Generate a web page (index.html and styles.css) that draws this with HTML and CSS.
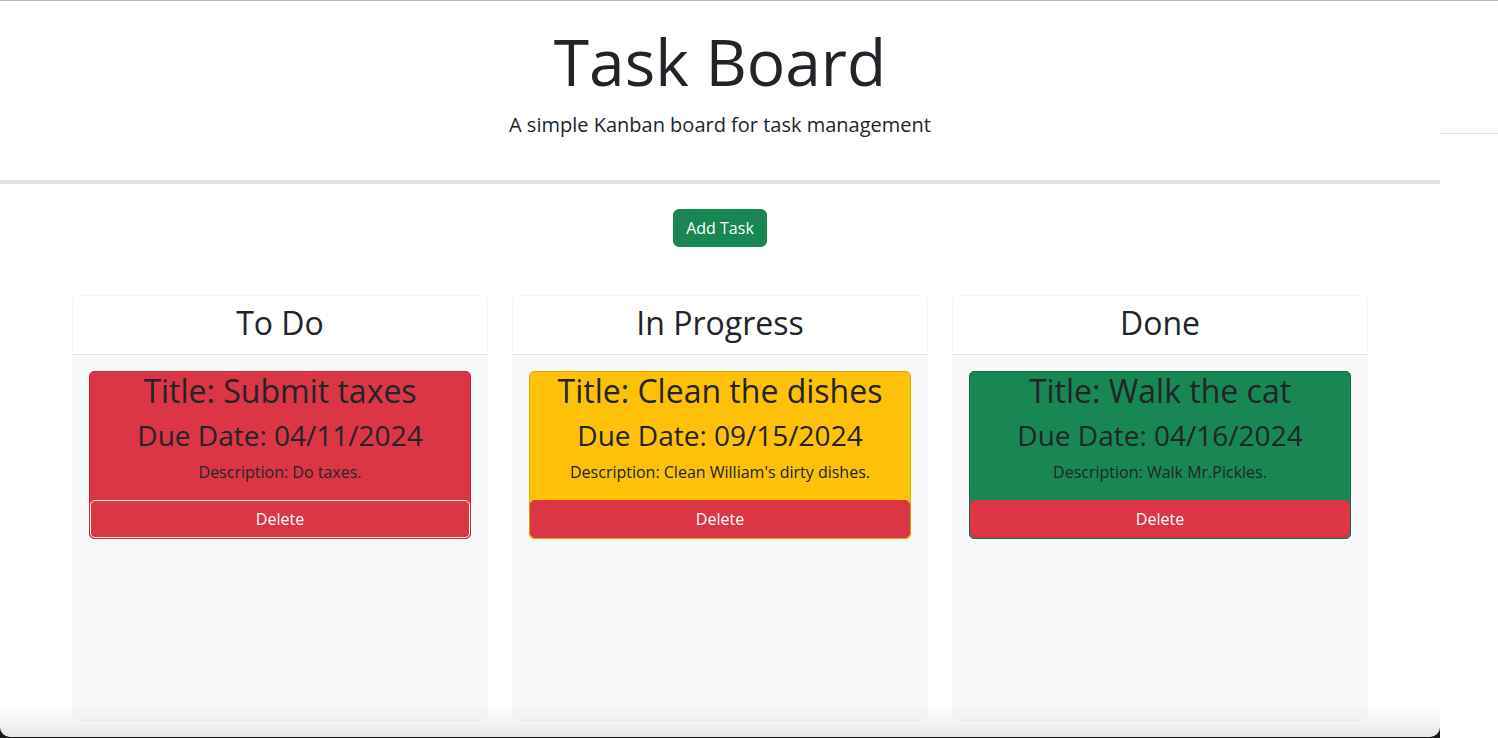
FILE: index.html
```html
<!DOCTYPE html>
<html lang="en">
<head>
<meta charset="utf-8">
<title>Task Board</title>
<link rel="stylesheet" href="styles.css">
</head>
<body>
<div class="screen">
  <div class="window">
    <div class="page">
      <header class="hero">
        <h1 class="hero-title">Task Board</h1>
        <p class="hero-lead">A simple Kanban board for task management</p>
      </header>
      <div class="actions">
        <button class="btn btn-add" type="button">Add Task</button>
      </div>
      <main class="board">
        <section class="lane">
          <div class="lane-head"><h2 class="lane-title">To Do</h2></div>
          <div class="lane-body">
            <article class="task task-red">
              <h3 class="task-title">Title: Submit taxes</h3>
              <h4 class="task-date">Due Date: 04/11/2024</h4>
              <p class="task-desc">Description: Do taxes.</p>
              <button class="btn btn-delete btn-delete-outline" type="button">Delete</button>
            </article>
          </div>
        </section>
        <section class="lane">
          <div class="lane-head"><h2 class="lane-title">In Progress</h2></div>
          <div class="lane-body">
            <article class="task task-yellow">
              <h3 class="task-title">Title: Clean the dishes</h3>
              <h4 class="task-date">Due Date: 09/15/2024</h4>
              <p class="task-desc">Description: Clean William's dirty dishes.</p>
              <button class="btn btn-delete" type="button">Delete</button>
            </article>
          </div>
        </section>
        <section class="lane">
          <div class="lane-head"><h2 class="lane-title">Done</h2></div>
          <div class="lane-body">
            <article class="task task-green">
              <h3 class="task-title">Title: Walk the cat</h3>
              <h4 class="task-date">Due Date: 04/16/2024</h4>
              <p class="task-desc">Description: Walk Mr.Pickles.</p>
              <button class="btn btn-delete" type="button">Delete</button>
            </article>
          </div>
        </section>
      </main>
    </div>
  </div>
  <div class="side"><div class="side-rule"></div></div>
</div>
</body>
</html>
```
FILE: styles.css
```css
* { box-sizing: border-box; }
html, body {
  margin: 0;
  padding: 0;
  background: #ffffff;
}
body {
  font-family: "Open Sans", "Noto Sans", sans-serif;
  color: #212529;
  font-size: 16px;
  line-height: 1.5;
}
.screen {
  display: flex;
  height: 738px;
  border-top: 1px solid #b9b8bd;
  overflow: hidden;
}
.window {
  width: 1440px;
  flex: none;
  height: 737px;
  background: #1a1a1a;
}
.page {
  position: relative;
  height: 736px;
  background: #ffffff;
  border-radius: 0 0 10px 10px;
  overflow: hidden;
}
.page::after {
  content: "";
  position: absolute;
  left: 0;
  right: 0;
  bottom: 0;
  height: 36px;
  background: linear-gradient(to bottom, rgba(0,0,0,0) 0%, rgba(0,0,0,0.03) 50%, rgba(0,0,0,0.1) 100%);
  pointer-events: none;
}
.side {
  flex: 1;
  background: #ffffff;
  padding-top: 132px;
}
.side-rule {
  height: 1px;
  background: #e2e2e2;
}
.hero {
  text-align: center;
  padding-top: 23px;
  height: 183px;
  border-bottom: 4px solid #dee2e6;
}
.hero-title {
  margin: 0 0 9px;
  font-size: 64px;
  font-weight: 400;
  line-height: 1.2;
}
.hero-lead {
  margin: 0;
  font-size: 20px;
  line-height: 1.5;
}
.actions {
  display: flex;
  justify-content: center;
  padding-top: 25px;
}
.btn {
  font-family: "Open Sans", "Noto Sans", sans-serif;
  font-size: 16px;
  line-height: 1.5;
  color: #ffffff;
  border: 1px solid transparent;
  border-radius: 6px;
  padding: 6px 12px;
  cursor: pointer;
}
.btn-add {
  background: #198754;
  border-color: #198754;
}
.board {
  display: grid;
  grid-template-columns: repeat(3, 416px);
  justify-content: center;
  column-gap: 24px;
  margin-top: 48px;
}
.lane {
  height: 426px;
  border: 1px solid rgba(0,0,0,0.015);
  border-radius: 6px;
  background: #f8f9fa;
  overflow: hidden;
}
.lane-head {
  background: #ffffff;
  text-align: center;
  padding: 8px 16px 12px;
  border-bottom: 1px solid #dee2e6;
}
.lane-title {
  margin: 0;
  font-size: 32px;
  font-weight: 400;
  line-height: 1.2;
}
.lane-body {
  padding: 16px;
}
.task {
  border: 1px solid;
  border-radius: 5px;
  text-align: center;
}
.task-red { background: #dc3545; border-color: #c22d3c; }
.task-yellow { background: #ffc107; border-color: #e0a800; }
.task-green { background: #198754; border-color: #146c43; }
.task-title {
  margin: 0 0 8px;
  font-size: 32px;
  font-weight: 400;
  line-height: 1.2;
}
.task-date {
  margin: 0 0 8px;
  font-size: 28px;
  font-weight: 400;
  line-height: 1.2;
}
.task-desc {
  margin: 0 0 16px;
  font-size: 16px;
  line-height: 1.5;
}
.btn-delete {
  display: block;
  width: 100%;
  background: #dc3545;
  border-color: #dc3545;
  border-radius: 5px;
}
.btn-delete-outline {
  border-color: #f4f4f4;
}
```
